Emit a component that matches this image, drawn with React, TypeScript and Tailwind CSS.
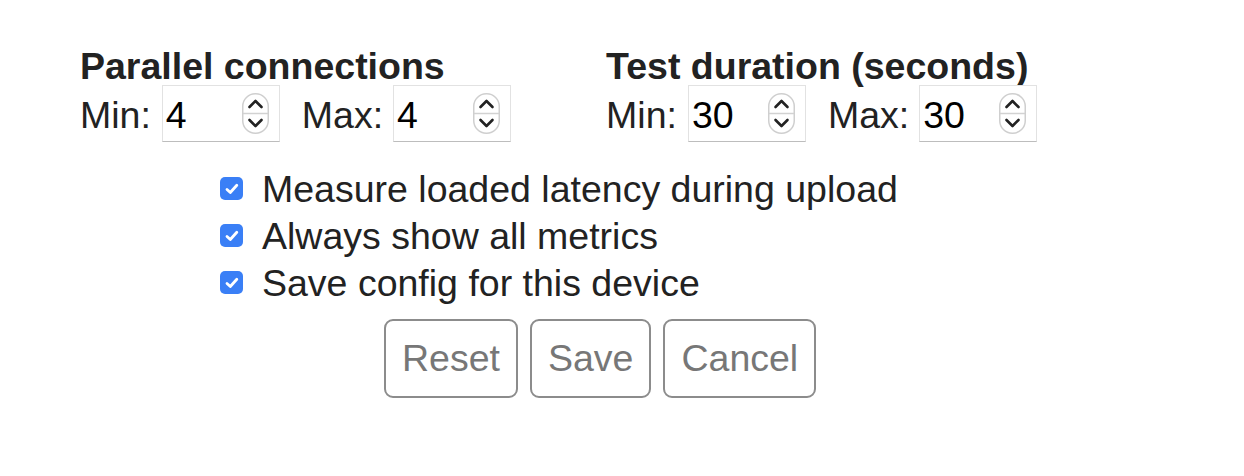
import React from 'react';

function Spinner() {
  return (
    <svg width="27" height="41" viewBox="0 0 27 41" className="block shrink-0">
      <rect x="0.75" y="0.75" width="25.5" height="39.5" rx="12.5" fill="#fff" stroke="#cfcfcf" strokeWidth="1.5" />
      <line x1="1" y1="20.5" x2="26" y2="20.5" stroke="#d2d2d2" strokeWidth="1.5" />
      <path d="M7.5 14 L13.5 8 L19.5 14" fill="none" stroke="#222" strokeWidth="2.6" strokeLinecap="round" strokeLinejoin="round" />
      <path d="M7.5 27 L13.5 33 L19.5 27" fill="none" stroke="#222" strokeWidth="2.6" strokeLinecap="round" strokeLinejoin="round" />
    </svg>
  );
}

function NumberBox({ value }: { value: string }) {
  return (
    <div className="flex h-[57px] w-[118px] items-center border border-[#e2e2e2] border-b-[#bdbdbd] bg-white pl-[3px] pr-[10px]">
      <input
        type="text"
        readOnly
        value={value}
        className="mt-[4px] w-full min-w-0 bg-transparent text-black outline-none"
      />
      <Spinner />
    </div>
  );
}

function Group({ title, min, max }: { title: string; min: string; max: string }) {
  return (
    <div>
      <div className="font-bold leading-[38px]">{title}</div>
      <div className="flex h-[57px] items-center">
        <span className="mt-[4px]">Min:</span>
        <div className="ml-[11px]">
          <NumberBox value={min} />
        </div>
        <span className="ml-[22px] mt-[4px]">Max:</span>
        <div className="ml-[10px]">
          <NumberBox value={max} />
        </div>
      </div>
    </div>
  );
}

const options = [
  'Measure loaded latency during upload',
  'Always show all metrics',
  'Save config for this device',
];

function Check({ label }: { label: string }) {
  return (
    <label className="flex h-[47px] items-center gap-[19px]">
      <span className="flex h-[23px] w-[23px] items-center justify-center rounded-[5px] bg-[#3a7ff6]">
        <svg width="16" height="16" viewBox="0 0 16 16">
          <path d="M3 8.5 L6.3 11.5 L12.8 4.2" fill="none" stroke="#fff" strokeWidth="2.8" strokeLinecap="round" strokeLinejoin="round" />
        </svg>
      </span>
      <span className="mt-[2px]">{label}</span>
    </label>
  );
}

export default function App() {
  return (
    <div className="min-h-[476px] bg-white pl-[80px] pt-[47px] font-['Liberation_Sans',Arial,sans-serif] text-[37.5px] leading-[43px] text-[#222]">
      <div className="flex gap-[95px]">
        <Group title="Parallel connections" min="4" max="4" />
        <Group title="Test duration (seconds)" min="30" max="30" />
      </div>

      <div className="ml-[140px] mt-[23px] flex flex-col">
        {options.map(o => (
          <Check key={o} label={o} />
        ))}
      </div>

      <div className="ml-[304px] mt-[13px] flex gap-[12px]">
        {['Reset', 'Save', 'Cancel'].map(b => (
          <button
            key={b}
            className="h-[79px] rounded-[9px] border-2 border-[#8c8c8c] bg-white px-[16px] text-[#777]"
          >
            {b}
          </button>
        ))}
      </div>
    </div>
  );
}
